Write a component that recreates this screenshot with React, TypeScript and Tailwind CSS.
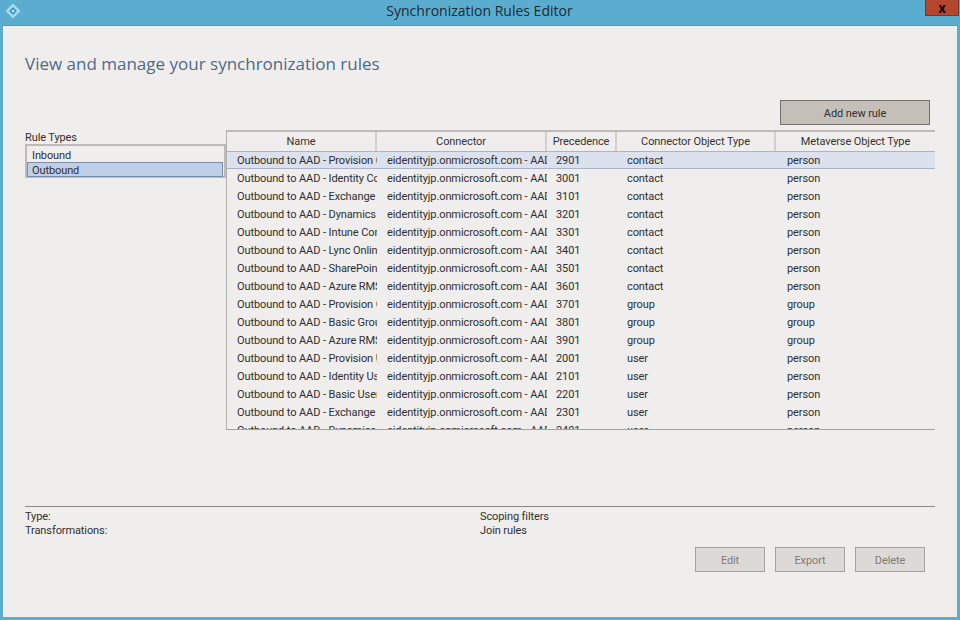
const rows = [
  ["Outbound to AAD - Provision Contact", "2901", "contact", "person"],
  ["Outbound to AAD - Identity Contact", "3001", "contact", "person"],
  ["Outbound to AAD - Exchange Contact", "3101", "contact", "person"],
  ["Outbound to AAD - Dynamics Contact", "3201", "contact", "person"],
  ["Outbound to AAD - Intune Contact", "3301", "contact", "person"],
  ["Outbound to AAD - Lync Online Contact", "3401", "contact", "person"],
  ["Outbound to AAD - SharePoint Contact", "3501", "contact", "person"],
  ["Outbound to AAD - Azure RMS Contact", "3601", "contact", "person"],
  ["Outbound to AAD - Provision Group", "3701", "group", "group"],
  ["Outbound to AAD - Basic Group", "3801", "group", "group"],
  ["Outbound to AAD - Azure RMS Group", "3901", "group", "group"],
  ["Outbound to AAD - Provision User", "2001", "user", "person"],
  ["Outbound to AAD - Identity User", "2101", "user", "person"],
  ["Outbound to AAD - Basic User", "2201", "user", "person"],
  ["Outbound to AAD - Exchange User", "2301", "user", "person"],
  ["Outbound to AAD - Dynamics User", "2401", "user", "person"],
];

const connector = "eidentityjp.onmicrosoft.com - AAD Connector";

const Logo = () => (
  <svg width="16" height="16" viewBox="0 0 16 16" className="ml-[5px] mt-[2px]">
    <path d="M8 .5L15.5 8 8 15.5.5 8z" fill="#a9dcee" />
    <path d="M8 4l4 4-4 4-4-4z" fill="#2f97c6" />
    <circle cx="8" cy="8" r="1.5" fill="#bfe6f3" />
  </svg>
);

const HeaderCell = ({ label, width }: { label: string; width: string }) => (
  <div className={`${width} shrink-0 text-center border-r-2 border-[#d2cfcc] leading-[19px]`}>
    {label}
  </div>
);

const SideButton = ({ label }: { label: string }) => (
  <div className="w-[70px] h-[25px] pt-[4px] flex items-center justify-center bg-[#dcd9d6] border border-[#a5a19d] text-[#7f7b77]">
    {label}
  </div>
);

const App = () => {
  return (
    <div className="w-[960px] h-[620px] flex flex-col bg-[#5badd0] font-['Roboto','Liberation_Sans',sans-serif] text-[11px] tracking-[-0.1px] text-[#2f2f2f] overflow-hidden">
      {/* title bar */}
      <div className="h-[25px] shrink-0 flex items-start">
        <div className="w-[34px] h-[20px] flex items-center">
          <Logo />
        </div>
        <div className="flex-1 text-center text-[14px] tracking-normal leading-[22px] text-[#1c2a33] font-['Open_Sans',sans-serif]">
          Synchronization Rules Editor
        </div>
        <div className="w-[34px] h-[16px] mr-px bg-[#b4452f] border border-[#6e3a30] border-t-0 flex items-center justify-center text-[#111] font-bold text-[15px] leading-[14px]">
          x
        </div>
      </div>

      {/* window body */}
      <div className="flex-1 mx-[3px] mb-[3px] bg-[#f0eeec] border-t border-[#5b93ad] pl-[22px] pr-[22px] flex flex-col">
        <h1 className="text-[17px] tracking-normal leading-[24px] mt-[26px] text-[#4c6a88] font-normal font-['Open_Sans',sans-serif]">
          View and manage your synchronization rules
        </h1>

        <div className="flex justify-end pr-[5px] mt-[24px]">
          <div className="w-[150px] h-[25px] pt-[4px] flex items-center justify-center bg-[#c5bfba] border border-[#75706b]">
            Add new rule
          </div>
        </div>

        <div className="flex mt-[5px]">
          {/* rule types */}
          <div className="w-[201px] shrink-0 pt-[1px]">
            <div className="leading-[13px]">Rule Types</div>
            <div className="h-[34px] border-2 border-[#bdbab7] pr-[1px] flex flex-col">
              <div className="pl-[5px] h-[16px] leading-[20px]">Inbound</div>
              <div className="h-[15px] leading-[15px] pl-[4px] bg-[#c0cfe8] border border-[#7f8ea8]">
                Outbound
              </div>
            </div>
          </div>

          {/* rules table */}
          <div className="w-[709px] h-[300px] border-l border-l-[#b3b0ad] border-b border-b-[#a5a19c] overflow-hidden flex flex-col">
            <div className="flex h-[21px] shrink-0 border-t-2 border-[#bdbab7] text-[#333]">
              <HeaderCell label="Name" width="w-[150px]" />
              <HeaderCell label="Connector" width="w-[170px]" />
              <HeaderCell label="Precedence" width="w-[70px]" />
              <HeaderCell label="Connector Object Type" width="w-[159px]" />
              <div className="flex-1 text-center leading-[19px]">Metaverse Object Type</div>
            </div>
            {rows.map(([name, precedence, connectorType, metaverseType], i) => (
              <div
                key={precedence}
                className={`flex h-[18px] shrink-0 whitespace-nowrap ${
                  i === 0 ? "bg-[#dce1ee] border-y border-[#a9b3c9] leading-[17px]" : "leading-[20px]"
                }`}
              >
                <div className="w-[150px] shrink-0 overflow-hidden pl-[10px]">{name}</div>
                <div className="w-[170px] shrink-0 overflow-hidden pl-[10px]">{connector}</div>
                <div className="w-[70px] shrink-0 pl-[9px]">{precedence}</div>
                <div className="w-[159px] shrink-0 pl-[10px]">{connectorType}</div>
                <div className="flex-1 pl-[11px]">{metaverseType}</div>
              </div>
            ))}
          </div>
        </div>

        {/* rule details */}
        <div className="mt-[76px] border-t border-[#8a8784] pt-[3px] grid grid-cols-[455px_1fr] leading-[14px]">
          <div>Type:</div>
          <div>Scoping filters</div>
          <div>Transformations:</div>
          <div>Join rules</div>
        </div>

        <div className="flex justify-end gap-[10px] pr-[10px] mt-[9px]">
          <SideButton label="Edit" />
          <SideButton label="Export" />
          <SideButton label="Delete" />
        </div>
      </div>
    </div>
  );
};

export default App;
